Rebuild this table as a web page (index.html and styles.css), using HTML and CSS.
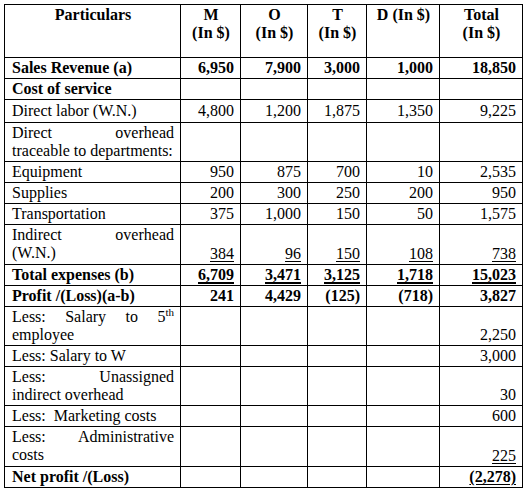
FILE: index.html
```html
<!DOCTYPE html>
<html lang="en">
<head>
    <meta charset="UTF-8">
    <title>Departmental Profit Statement</title>
    <link rel="stylesheet" href="styles.css">
</head>
<body>
    <table class="statement">
        <colgroup>
            <col class="col-label">
            <col class="col-m">
            <col class="col-o">
            <col class="col-t">
            <col class="col-d">
            <col class="col-total">
        </colgroup>
        <thead>
            <tr class="head-row">
                <th>Particulars</th>
                <th>M<br>(In $)</th>
                <th>O<br>(In $)</th>
                <th>T<br>(In $)</th>
                <th>D (In $)</th>
                <th>Total<br>(In $)</th>
            </tr>
        </thead>
        <tbody>
            <tr class="bold">
                <td class="label">Sales Revenue (a)</td>
                <td>6,950</td>
                <td>7,900</td>
                <td>3,000</td>
                <td>1,000</td>
                <td>18,850</td>
            </tr>
            <tr class="bold">
                <td class="label">Cost of service</td>
                <td></td><td></td><td></td><td></td><td></td>
            </tr>
            <tr class="labor-row">
                <td class="label">Direct labor (W.N.)</td>
                <td>4,800</td>
                <td>1,200</td>
                <td>1,875</td>
                <td>1,350</td>
                <td>9,225</td>
            </tr>
            <tr>
                <td class="label">Direct overhead traceable to departments:</td>
                <td></td><td></td><td></td><td></td><td></td>
            </tr>
            <tr>
                <td class="label">Equipment</td>
                <td>950</td>
                <td>875</td>
                <td>700</td>
                <td>10</td>
                <td>2,535</td>
            </tr>
            <tr>
                <td class="label">Supplies</td>
                <td>200</td>
                <td>300</td>
                <td>250</td>
                <td>200</td>
                <td>950</td>
            </tr>
            <tr>
                <td class="label">Transportation</td>
                <td>375</td>
                <td>1,000</td>
                <td>150</td>
                <td>50</td>
                <td>1,575</td>
            </tr>
            <tr class="tall">
                <td class="label"><span class="spread">Indirect overhead</span>(W.N.)</td>
                <td><u>384</u></td>
                <td><u>96</u></td>
                <td><u>150</u></td>
                <td><u>108</u></td>
                <td><u>738</u></td>
            </tr>
            <tr class="bold total-row">
                <td class="label">Total expenses (b)</td>
                <td><u>6,709</u></td>
                <td><u>3,471</u></td>
                <td><u>3,125</u></td>
                <td><u>1,718</u></td>
                <td><u>15,023</u></td>
            </tr>
            <tr class="bold">
                <td class="label">Profit /(Loss)(a-b)</td>
                <td>241</td>
                <td>4,429</td>
                <td>(125)</td>
                <td>(718)</td>
                <td>3,827</td>
            </tr>
            <tr>
                <td class="label">Less: Salary to 5<sup>th</sup> employee</td>
                <td></td><td></td><td></td><td></td>
                <td>2,250</td>
            </tr>
            <tr>
                <td class="label">Less: Salary to W</td>
                <td></td><td></td><td></td><td></td>
                <td>3,000</td>
            </tr>
            <tr>
                <td class="label">Less: Unassigned indirect overhead</td>
                <td></td><td></td><td></td><td></td>
                <td>30</td>
            </tr>
            <tr>
                <td class="label">Less:&nbsp; Marketing costs</td>
                <td></td><td></td><td></td><td></td>
                <td>600</td>
            </tr>
            <tr class="tall">
                <td class="label">Less: Administrative costs</td>
                <td></td><td></td><td></td><td></td>
                <td><u>225</u></td>
            </tr>
            <tr class="bold">
                <td class="label">Net profit /(Loss)</td>
                <td></td><td></td><td></td><td></td>
                <td><u>(2,278)</u></td>
            </tr>
        </tbody>
    </table>
</body>
</html>
```

FILE: styles.css
```css
body {
    margin: 0;
    padding: 4px;
    background: #fff;
    color: #000;
    font-family: 'Liberation Serif', 'Times New Roman', serif;
    font-size: 16px;
}

.statement {
    border-collapse: collapse;
    table-layout: fixed;
    width: 518px;
    border: 1.5px solid #000;
}

.col-label { width: 176px; }
.col-m { width: 60px; }
.col-o { width: 67px; }
.col-t { width: 59px; }
.col-d { width: 73px; }
.col-total { width: 83px; }

.statement th,
.statement td {
    border: 1px solid #000;
    padding: 1px 6px 1px 7px;
    line-height: 18px;
}

.head-row th {
    height: 50px;
    vertical-align: top;
    text-align: center;
    font-weight: bold;
}

.statement td {
    text-align: right;
    vertical-align: bottom;
}

.statement td.label {
    text-align: justify;
    vertical-align: top;
}

.spread {
    display: block;
    text-align-last: justify;
}

.bold td {
    font-weight: bold;
}

.labor-row td {
    padding-top: 2px;
    padding-bottom: 2px;
}

.tall td {
    height: 37px;
}

.total-row u {
    text-decoration-thickness: 2px;
}

u {
    text-underline-offset: 2px;
}

sup {
    font-size: 11px;
    line-height: 0;
    vertical-align: 6px;
}
```
